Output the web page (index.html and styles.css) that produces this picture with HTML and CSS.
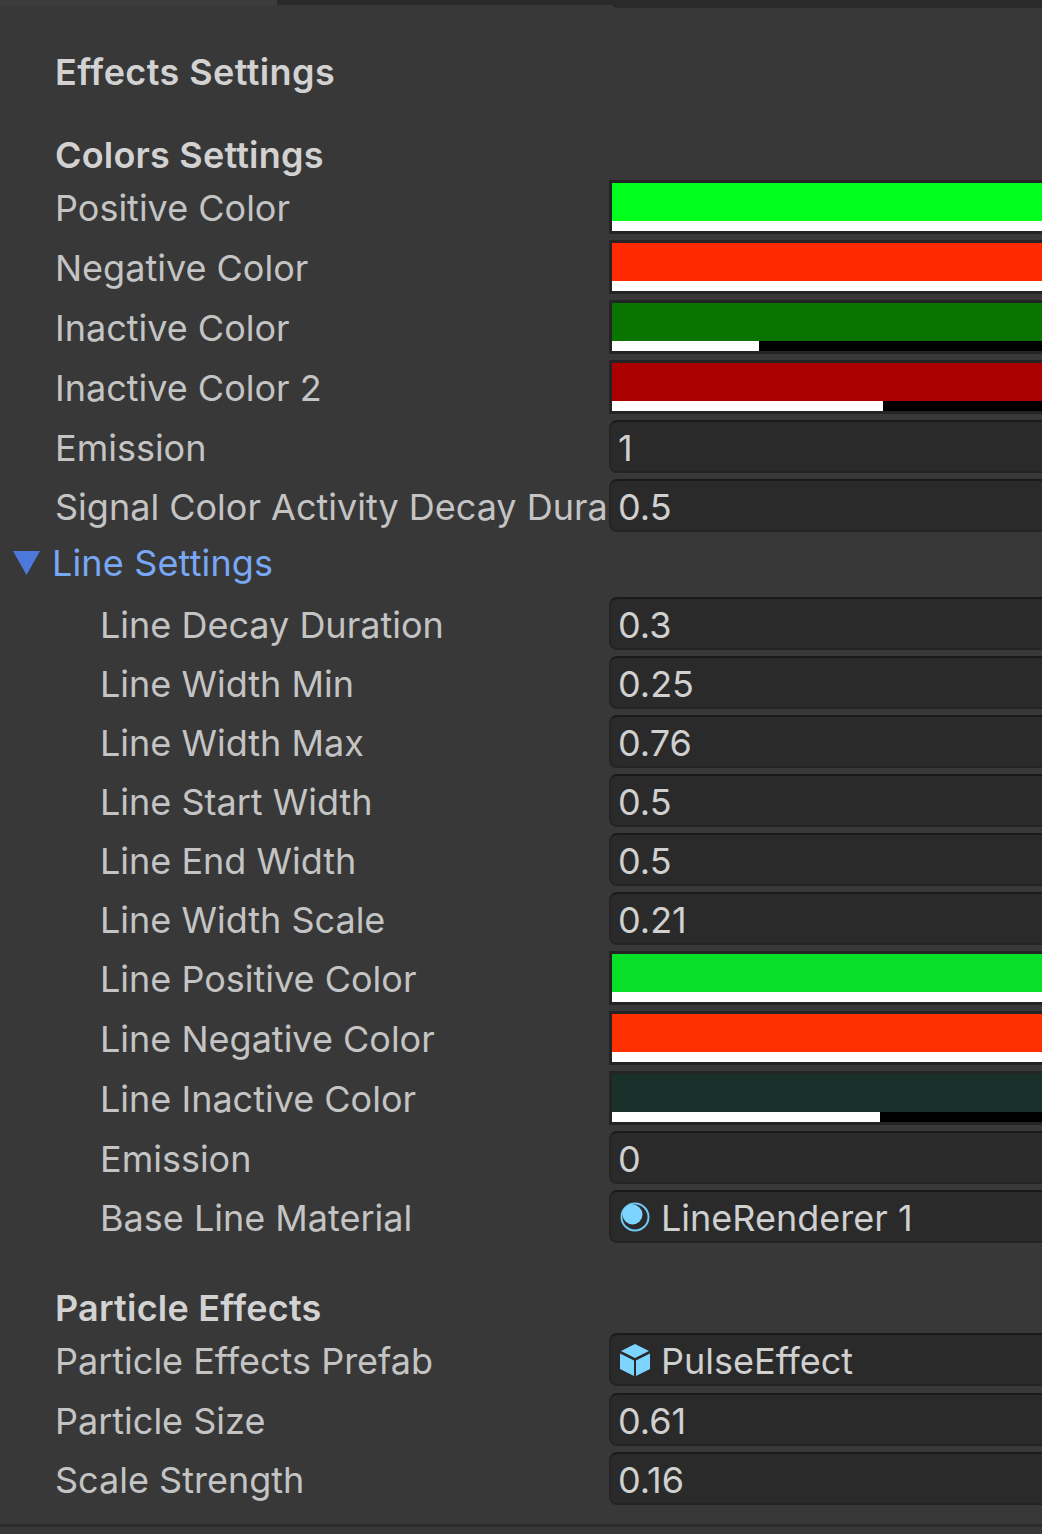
FILE: index.html
```html
<!DOCTYPE html>
<html lang="en">
<head>
    <meta charset="UTF-8">
    <title>Effects Settings</title>
    <link rel="stylesheet" href="styles.css">
</head>
<body>
    <div class="topStrip">
        <div class="topLeft"></div>
        <div class="topMid"></div>
        <div class="topRight"></div>
    </div>

    <div class="inspector">
        <div class="heading mainHeading">Effects Settings</div>
        <div class="heading colorsHeading">Colors Settings</div>

        <div class="row first">
            <div class="label">Positive Color</div>
            <div class="swatch"><div class="swatchColor" style="background:#00ff1c"></div><div class="alpha"><div class="alphaFill" style="width:100%"></div></div></div>
        </div>
        <div class="row">
            <div class="label">Negative Color</div>
            <div class="swatch"><div class="swatchColor" style="background:#ff2a00"></div><div class="alpha"><div class="alphaFill" style="width:100%"></div></div></div>
        </div>
        <div class="row">
            <div class="label">Inactive Color</div>
            <div class="swatch"><div class="swatchColor" style="background:#097500"></div><div class="alpha"><div class="alphaFill" style="width:147px"></div></div></div>
        </div>
        <div class="row">
            <div class="label">Inactive Color 2</div>
            <div class="swatch"><div class="swatchColor" style="background:#aa0000"></div><div class="alpha"><div class="alphaFill" style="width:271px"></div></div></div>
        </div>
        <div class="row">
            <div class="label">Emission</div>
            <div class="field">1</div>
        </div>
        <div class="row tight">
            <div class="label">Signal Color Activity Decay Dura</div>
            <div class="field">0.5</div>
        </div>

        <div class="foldout">
            <svg class="arrow" width="27" height="26" viewBox="0 0 27 26"><path d="M0 1H27L13.5 25Z" fill="#4d78dc"/></svg>
            <span>Line Settings</span>
        </div>

        <div class="indented">
            <div class="row first">
                <div class="label">Line Decay Duration</div>
                <div class="field">0.3</div>
            </div>
            <div class="row tight">
                <div class="label">Line Width Min</div>
                <div class="field">0.25</div>
            </div>
            <div class="row tight">
                <div class="label">Line Width Max</div>
                <div class="field">0.76</div>
            </div>
            <div class="row tight">
                <div class="label">Line Start Width</div>
                <div class="field">0.5</div>
            </div>
            <div class="row tight">
                <div class="label">Line End Width</div>
                <div class="field">0.5</div>
            </div>
            <div class="row tight">
                <div class="label">Line Width Scale</div>
                <div class="field">0.21</div>
            </div>
            <div class="row tight">
                <div class="label">Line Positive Color</div>
                <div class="swatch"><div class="swatchColor" style="background:#08e028"></div><div class="alpha"><div class="alphaFill" style="width:100%"></div></div></div>
            </div>
            <div class="row">
                <div class="label">Line Negative Color</div>
                <div class="swatch"><div class="swatchColor" style="background:#ff3000"></div><div class="alpha"><div class="alphaFill" style="width:100%"></div></div></div>
            </div>
            <div class="row">
                <div class="label">Line Inactive Color</div>
                <div class="swatch"><div class="swatchColor" style="background:#1a302b"></div><div class="alpha"><div class="alphaFill" style="width:268px"></div></div></div>
            </div>
            <div class="row">
                <div class="label">Emission</div>
                <div class="field">0</div>
            </div>
            <div class="row tight">
                <div class="label">Base Line Material</div>
                <div class="field objectField">
                    <svg class="objIcon" width="32" height="32" viewBox="0 0 32 32">
                        <circle cx="16" cy="16" r="13.5" fill="none" stroke="#6fcbf5" stroke-width="2"/>
                        <circle cx="13.5" cy="13.5" r="10" fill="#7dd5ff"/>
                    </svg>
                    <span class="objName">LineRenderer 1</span>
                </div>
            </div>
        </div>

        <div class="heading particleHeading">Particle Effects</div>
        <div class="row first">
            <div class="label">Particle Effects Prefab</div>
            <div class="field objectField">
                <svg class="objIcon" width="32" height="34" viewBox="0 0 32 34">
                    <path d="M16 1L30 8L16 15L2 8Z" fill="#7dd5ff"/>
                    <path d="M1 10.5L15 17.5V33L1 26Z" fill="#7dd5ff"/>
                    <path d="M31 10.5L17 17.5V33L31 26Z" fill="#7dd5ff"/>
                </svg>
                <span class="objName">PulseEffect</span>
            </div>
        </div>
        <div class="row">
            <div class="label">Particle Size</div>
            <div class="field">0.61</div>
        </div>
        <div class="row tight">
            <div class="label">Scale Strength</div>
            <div class="field">0.16</div>
        </div>
    </div>

    <div class="bottomLine"></div>
</body>
</html>
```

FILE: styles.css
```css
html, body {
    margin: 0;
    height: 100%;
}
body {
    width: 1042px;
    height: 1534px;
    overflow: hidden;
    background-color: #383838;
    color: #c4c4c4;
    font-family: Inter, "Liberation Sans", sans-serif;
    font-size: 36px;
}
.topStrip {
    display: flex;
    height: 10px;
}
.topLeft {
    width: 277px;
    height: 5px;
    background-color: #3c3c3c;
}
.topMid {
    width: 335px;
    height: 5px;
    background-color: #2a2a2a;
}
.topRight {
    flex: 1;
    height: 8px;
    background-color: #2a2a2a;
    border-bottom-left-radius: 5px;
}
.inspector {
    padding-left: 55px;
}
.heading {
    font-weight: 600;
    color: #d2d2d2;
    height: 40px;
    line-height: 38px;
    letter-spacing: 0.2px;
}
.mainHeading {
    margin-top: 43px;
    letter-spacing: 0.4px;
}
.colorsHeading {
    margin-top: 43px;
    margin-bottom: 4px;
}
.particleHeading {
    margin-top: 47px;
    margin-bottom: 4px;
}
.row {
    display: flex;
    align-items: flex-start;
    height: 52px;
    margin-top: 8px;
}
.row.tight {
    margin-top: 7px;
}
.row.first {
    margin-top: 0;
}
.label {
    width: 554px;
    height: 52px;
    flex: none;
    box-sizing: border-box;
    padding-top: 2px;
    padding-right: 3px;
    line-height: 52px;
    white-space: nowrap;
    overflow: hidden;
}
.indented {
    padding-left: 45px;
}
.indented .label {
    width: 509px;
}
.field {
    flex: 1;
    box-sizing: border-box;
    height: 53px;
    line-height: 52px;
    padding-left: 7px;
    background-color: #2a2a2a;
    border: 2px solid #242424;
    border-top-color: #1a1a1a;
    border-right: none;
    border-radius: 8px 0 0 8px;
    color: #d0d0d0;
}
.objectField {
    display: flex;
    align-items: center;
    gap: 10px;
    padding-left: 8px;
}
.objIcon {
    flex: none;
}
.objName {
    padding-top: 2px;
}
.swatch {
    flex: 1;
    height: 54px;
    box-sizing: border-box;
    background-color: #242424;
    padding: 3px 0 3px 3px;
    display: flex;
    flex-direction: column;
}
.swatchColor {
    height: 38px;
}
.alpha {
    height: 10px;
    background-color: #000;
}
.alphaFill {
    height: 100%;
    background-color: #fff;
}
.foldout {
    display: flex;
    align-items: center;
    height: 40px;
    margin-top: 12px;
    margin-bottom: 14px;
    margin-left: -42px;
    gap: 12px;
    color: #78a8f5;
    letter-spacing: 0.15px;
}
.arrow {
    flex: none;
}
.bottomLine {
    position: absolute;
    left: 0;
    right: 0;
    top: 1524px;
    height: 3px;
    background-color: #2a2a2a;
}
```
